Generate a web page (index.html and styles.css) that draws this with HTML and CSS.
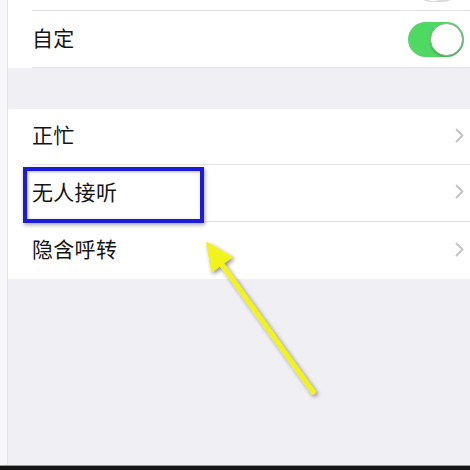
FILE: index.html
```html
<!DOCTYPE html>
<html lang="zh">
<head>
<meta charset="utf-8">
<link rel="stylesheet" href="styles.css">
</head>
<body>
<div class="page">
  <div class="content">
    <div class="edge"></div>
    <div class="main">
      <div class="group">
        <div class="row row-partial">
          <div class="toggle toggle-off toggle-clip"><span class="knob"></span></div>
        </div>
        <div class="row">
          <span class="label">自定</span>
          <div class="toggle toggle-on"><span class="knob"></span></div>
        </div>
      </div>
      <div class="spacer"></div>
      <div class="group">
        <div class="row">
          <span class="label">正忙</span>
          <svg class="chev" viewBox="0 0 9 15" width="9" height="15"><path d="M1.5 1.5 L7.5 7.5 L1.5 13.5" fill="none" stroke="#c4c4c9" stroke-width="2" stroke-linecap="round" stroke-linejoin="round"/></svg>
        </div>
        <div class="row">
          <span class="label">无人接听</span>
          <svg class="chev" viewBox="0 0 9 15" width="9" height="15"><path d="M1.5 1.5 L7.5 7.5 L1.5 13.5" fill="none" stroke="#c4c4c9" stroke-width="2" stroke-linecap="round" stroke-linejoin="round"/></svg>
        </div>
        <div class="row row-last">
          <span class="label">隐含呼转</span>
          <svg class="chev" viewBox="0 0 9 15" width="9" height="15"><path d="M1.5 1.5 L7.5 7.5 L1.5 13.5" fill="none" stroke="#c4c4c9" stroke-width="2" stroke-linecap="round" stroke-linejoin="round"/></svg>
        </div>
      </div>
    </div>
  </div>
  <div class="bottombar"></div>
  <div class="highlight"></div>
  <svg class="arrow" viewBox="0 0 470 470" width="470" height="470">
    <defs>
      <filter id="sh" x="-20%" y="-20%" width="140%" height="140%">
        <feGaussianBlur in="SourceAlpha" stdDeviation="2"/>
        <feOffset dx="2" dy="2" result="b"/>
        <feComponentTransfer><feFuncA type="linear" slope="0.45"/></feComponentTransfer>
        <feMerge><feMergeNode/><feMergeNode in="SourceGraphic"/></feMerge>
      </filter>
    </defs>
    <g filter="url(#sh)">
      <line x1="220" y1="262" x2="313" y2="392" stroke="#f2f21c" stroke-width="5" stroke-linecap="round"/>
      <polygon points="207,243 212,271 231,257" fill="#f2f21c" stroke="#f2f21c" stroke-width="2" stroke-linejoin="round"/>
    </g>
  </svg>
</div>
</body>
</html>
```

FILE: styles.css
```css
html, body {
  margin: 0;
  padding: 0;
}
body {
  width: 470px;
  height: 470px;
  overflow: hidden;
  background: #efeff4;
  font-family: "Noto Sans CJK SC", "Noto Sans", sans-serif;
}
.page {
  position: relative;
  width: 470px;
  height: 470px;
  display: flex;
  flex-direction: column;
}
.content {
  flex: 1;
  display: flex;
}
.edge {
  width: 7px;
  background: #f8f8fa;
  border-right: 1px solid #e4e4e8;
}
.main {
  flex: 1;
  display: flex;
  flex-direction: column;
}
.group {
  background: #ffffff;
  padding-left: 24px;
}
.row {
  height: 56px;
  box-sizing: border-box;
  display: flex;
  align-items: center;
  justify-content: space-between;
  padding-right: 6px;
  padding-bottom: 3px;
  border-bottom: 1px solid #e3e3e6;
  overflow: hidden;
}
.row + .row {
  height: 57px;
}
.row-partial {
  height: 11px;
  padding-bottom: 0;
  align-items: flex-end;
  justify-content: flex-end;
}
.row-last {
  border-bottom: none;
}
.label {
  font-size: 21px;
  line-height: 1.2;
  color: #151515;
  letter-spacing: 0.3px;
}
.spacer {
  height: 41px;
}
.toggle {
  width: 56px;
  height: 35px;
  border-radius: 18px;
  box-sizing: border-box;
  display: flex;
  align-items: center;
  padding: 1px;
  flex-shrink: 0;
}
.toggle-on {
  background: #4fd964;
  justify-content: flex-end;
  margin-top: 3px;
}
.toggle-off {
  background: #ffffff;
  border: 2px solid #e2e2e6;
  justify-content: flex-start;
}
.toggle-clip {
  margin-bottom: 8px;
  margin-right: 4px;
  width: 46px;
  border-color: #d9dcd9;
}
.toggle-clip .knob {
  border: none;
  box-shadow: none;
}
.knob {
  width: 33px;
  height: 33px;
  border-radius: 50%;
  background: #ffffff;
  box-sizing: border-box;
  border: 1px solid #9aa79c;
  box-shadow: 0 1px 2px rgba(0,0,0,0.25);
}
.bottombar {
  height: 4px;
  background: #151515;
  border-top: 1px solid #9a9a9e;
}
.highlight {
  position: absolute;
  left: 23px;
  top: 167px;
  width: 181px;
  height: 56px;
  box-sizing: border-box;
  border: 4px solid #1b1bd8;
  box-shadow: 1px 2px 4px rgba(0,0,0,0.35), inset 1px 1px 3px rgba(0,0,0,0.3);
}
.arrow {
  position: absolute;
  left: 0;
  top: 0;
  pointer-events: none;
}
```
